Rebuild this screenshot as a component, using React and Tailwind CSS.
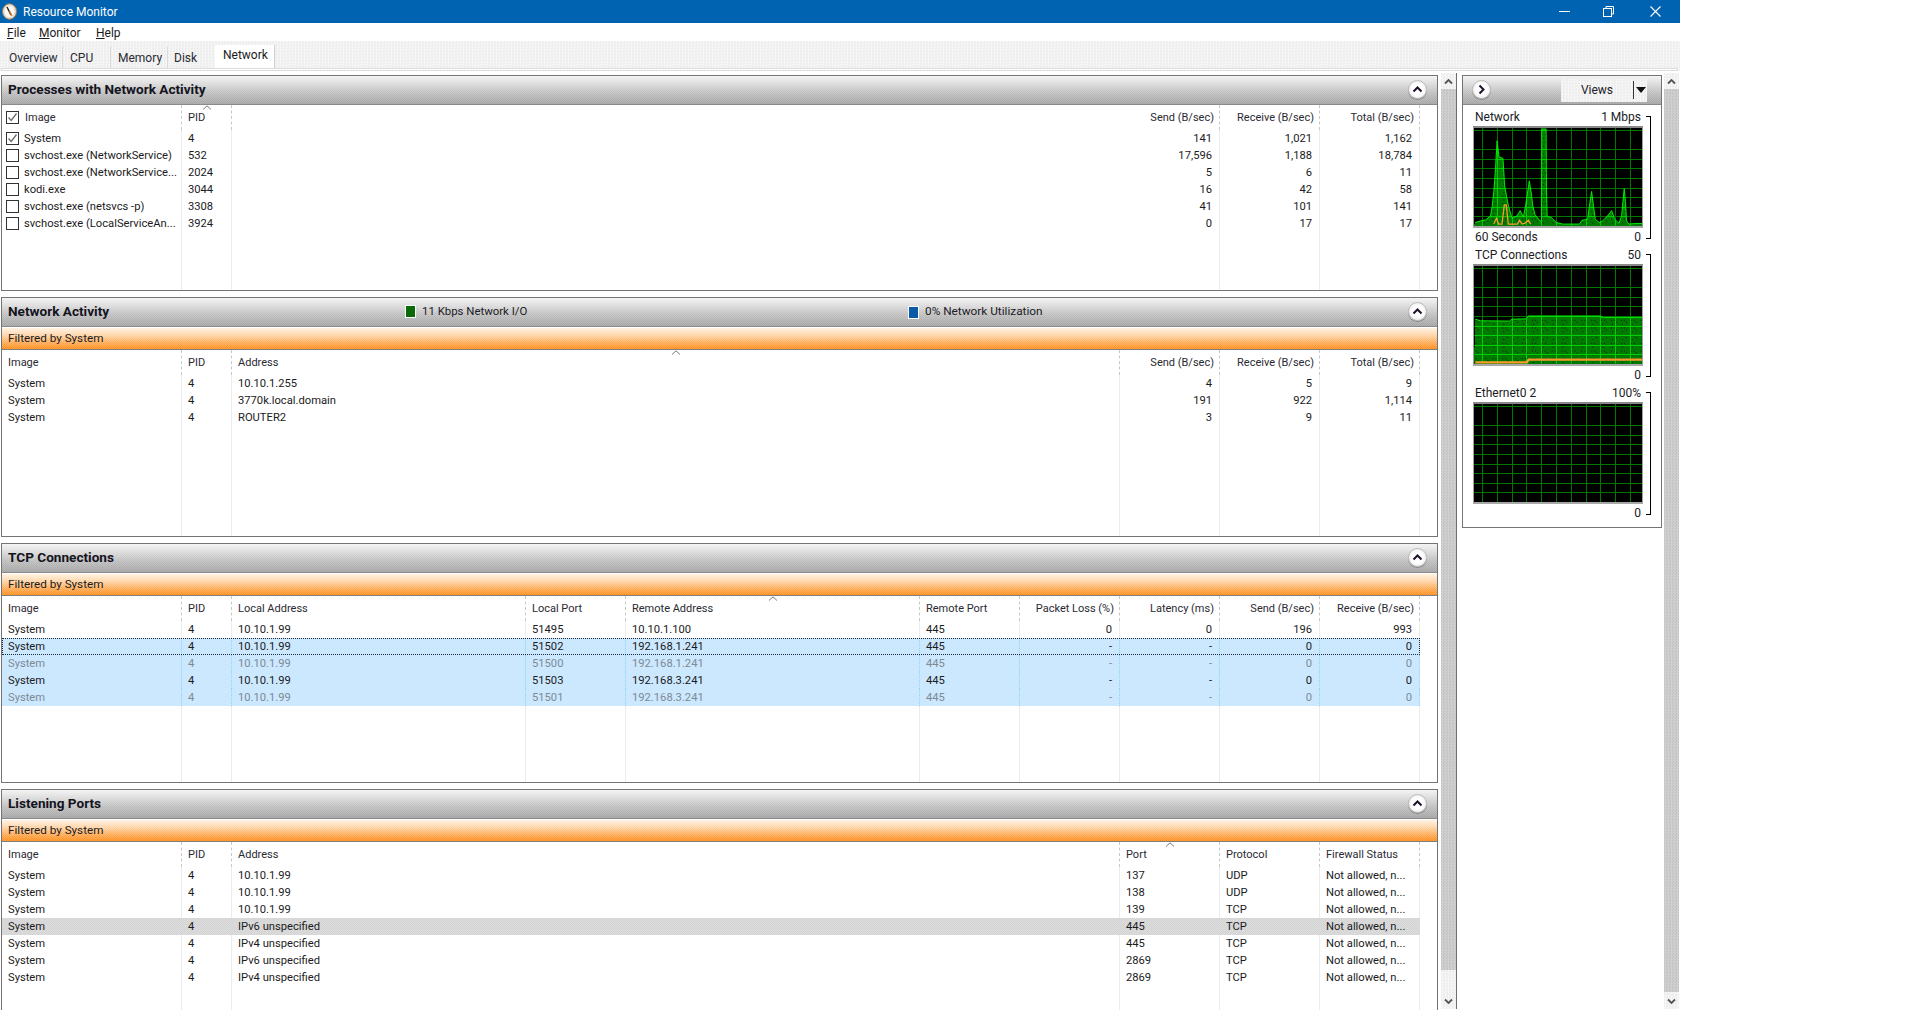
import React from 'react';

const FONT = "font-['Roboto','Liberation_Sans',sans-serif]";
const HEADER_BG = '[background:repeating-conic-gradient(#ffffff24_0_25%,#0000_0_50%)_0_0/2px_2px,linear-gradient(#f3f3f3,#e4e4e4_18%,#bdbdbd_62%,#a4a4a4)]';
const ORANGE_BG = '[background:repeating-conic-gradient(#ffffff30_0_25%,#0000_0_50%)_0_0/2px_2px,linear-gradient(#fff1e0,#ffd3a4_35%,#ffa64d_72%,#ff8a14)]';
const SCROLL_BG = '[background:repeating-conic-gradient(#ffffff33_0_25%,#0000_0_50%)_0_0/3px_3px,#c4c4c4]';
const DOTTED_BG = '[background:repeating-conic-gradient(#ffffff80_0_25%,#0000_0_50%)_0_0/3px_3px,#ececec]';
const GRAY_ROW_BG = '[background:repeating-conic-gradient(#ffffff30_0_25%,#0000_0_50%)_0_0/2px_2px,#d4d4d4]';

const PROC_GRID = 'grid-cols-[180px_50px_888px_100px_100px_100px]';
const TCP_GRID = 'grid-cols-[180px_50px_294px_100px_294px_100px_100px_100px_100px_100px]';

const processColumns = [
  { label: 'Image' },
  { label: 'PID', sorted: true },
  { label: '', noSep: true },
  { label: 'Send (B/sec)', right: true },
  { label: 'Receive (B/sec)', right: true },
  { label: 'Total (B/sec)', right: true },
];

const processRows = [
  { checked: true, cells: ['System', '4', '', '141', '1,021', '1,162'] },
  { cells: ['svchost.exe (NetworkService)', '532', '', '17,596', '1,188', '18,784'] },
  { cells: ['svchost.exe (NetworkService...', '2024', '', '5', '6', '11'] },
  { cells: ['kodi.exe', '3044', '', '16', '42', '58'] },
  { cells: ['svchost.exe (netsvcs -p)', '3308', '', '41', '101', '141'] },
  { cells: ['svchost.exe (LocalServiceAn...', '3924', '', '0', '17', '17'] },
];

const activityColumns = [
  { label: 'Image' },
  { label: 'PID' },
  { label: 'Address', sorted: true },
  { label: 'Send (B/sec)', right: true },
  { label: 'Receive (B/sec)', right: true },
  { label: 'Total (B/sec)', right: true },
];

const activityRows = [
  { cells: ['System', '4', '10.10.1.255', '4', '5', '9'] },
  { cells: ['System', '4', '3770k.local.domain', '191', '922', '1,114'] },
  { cells: ['System', '4', 'ROUTER2', '3', '9', '11'] },
];

const tcpColumns = [
  { label: 'Image' },
  { label: 'PID' },
  { label: 'Local Address' },
  { label: 'Local Port' },
  { label: 'Remote Address', sorted: true },
  { label: 'Remote Port' },
  { label: 'Packet Loss (%)', right: true },
  { label: 'Latency (ms)', right: true },
  { label: 'Send (B/sec)', right: true },
  { label: 'Receive (B/sec)', right: true },
];

const tcpRows = [
  { cells: ['System', '4', '10.10.1.99', '51495', '10.10.1.100', '445', '0', '0', '196', '993'] },
  { state: 'focus', cells: ['System', '4', '10.10.1.99', '51502', '192.168.1.241', '445', '-', '-', '0', '0'] },
  { state: 'dim', cells: ['System', '4', '10.10.1.99', '51500', '192.168.1.241', '445', '-', '-', '0', '0'] },
  { state: 'selected', cells: ['System', '4', '10.10.1.99', '51503', '192.168.3.241', '445', '-', '-', '0', '0'] },
  { state: 'dim', cells: ['System', '4', '10.10.1.99', '51501', '192.168.3.241', '445', '-', '-', '0', '0'] },
];

const portColumns = [
  { label: 'Image' },
  { label: 'PID' },
  { label: 'Address' },
  { label: 'Port', sorted: true },
  { label: 'Protocol' },
  { label: 'Firewall Status' },
];

const portRows = [
  { cells: ['System', '4', '10.10.1.99', '137', 'UDP', 'Not allowed, n...'] },
  { cells: ['System', '4', '10.10.1.99', '138', 'UDP', 'Not allowed, n...'] },
  { cells: ['System', '4', '10.10.1.99', '139', 'TCP', 'Not allowed, n...'] },
  { state: 'gray', cells: ['System', '4', 'IPv6 unspecified', '445', 'TCP', 'Not allowed, n...'] },
  { cells: ['System', '4', 'IPv4 unspecified', '445', 'TCP', 'Not allowed, n...'] },
  { cells: ['System', '4', 'IPv6 unspecified', '2869', 'TCP', 'Not allowed, n...'] },
  { cells: ['System', '4', 'IPv4 unspecified', '2869', 'TCP', 'Not allowed, n...'] },
];

const CheckBox = ({ checked }) => (
  <span className="w-[13px] h-[13px] shrink-0 border border-[#333] bg-white flex items-center justify-center">
    {checked && (
      <svg width="11" height="11" viewBox="0 0 11 11" fill="none" stroke="#6b6b6b" strokeWidth="1.3">
        <path d="M1.5 5.5 L4.2 8.5 L9.5 1.5" />
      </svg>
    )}
  </span>
);

const SortCaret = () => (
  <svg className="absolute top-[0px] left-1/2 -translate-x-1/2" width="9" height="5" viewBox="0 0 9 5" fill="none" stroke="#777" strokeWidth="1">
    <path d="M0.5 4.5 L4.5 0.8 L8.5 4.5" />
  </svg>
);

const CircleButton = ({ dir }) => (
  <span className="w-[19px] h-[19px] -mt-[2px] rounded-full border border-[#bcbcbc] bg-[radial-gradient(circle,#ffffff_45%,#dedede)] shadow-[0_1px_0_#888] flex items-center justify-center shrink-0">
    <svg width="11" height="11" viewBox="0 0 11 11" fill="none" stroke="#20122b" strokeWidth="2">
      {dir === 'up' ? <path d="M1.5 7.5 L5.5 3.5 L9.5 7.5" /> : <path d="M3.5 1.5 L7.5 5.5 L3.5 9.5" />}
    </svg>
  </span>
);

const TableRow = ({ columns, grid, row, hasChecks }) => {
  const state = row.state;
  const isBlue = state === 'focus' || state === 'dim' || state === 'selected';
  let rowClass = '';
  if (isBlue) rowClass = 'bg-[#cce8ff]';
  if (state === 'gray') rowClass = GRAY_ROW_BG;
  if (state === 'focus') rowClass += ' outline outline-1 outline-dotted outline-[#1c2a3a] -outline-offset-1';
  let sepClass = 'border-[#ececec]';
  if (isBlue) sepClass = 'border-dotted border-[#8fd3f4]';
  if (state === 'gray') sepClass = 'border-transparent';
  const textClass = state === 'dim' ? 'text-[#7d8a94]' : 'text-[#1b1b22]';

  return (
    <div className={`grid ${grid} w-[1418px] h-[17px] text-[11.2px] ${rowClass}`}>
      {row.cells.map((cell, i) => (
        <div
          key={i}
          className={`border-r ${columns[i].noSep ? 'border-transparent' : sepClass} ${textClass} leading-[17px] whitespace-nowrap overflow-hidden ${
            columns[i].right ? 'text-right pr-[7px]' : 'pl-[6px]'
          } ${i === 0 && hasChecks ? 'flex items-center gap-[5px] !pl-[4px]' : ''}`}
        >
          {i === 0 && hasChecks && <CheckBox checked={row.checked} />}
          {cell}
        </div>
      ))}
    </div>
  );
};

const Table = ({ columns, rows, grid, hasChecks }) => (
  <div className="flex-1 flex flex-col min-h-0">
    <div className={`grid ${grid} w-[1418px] h-[25px] text-[11px]`}>
      {columns.map((col, i) => (
        <div
          key={i}
          className={`relative border-r border-dashed ${col.noSep ? 'border-transparent' : 'border-[#c8c8c8]'} leading-[25px] text-[#2a2a32] whitespace-nowrap ${
            col.right ? 'text-right pr-[5px]' : 'pl-[6px]'
          } ${i === 0 && hasChecks ? 'flex items-center gap-[6px] !pl-[4px]' : ''}`}
        >
          {i === 0 && hasChecks && <CheckBox checked />}
          {col.label}
          {col.sorted && <SortCaret />}
        </div>
      ))}
    </div>
    {rows.map((row, i) => (
      <TableRow key={i} columns={columns} grid={grid} row={row} hasChecks={hasChecks} />
    ))}
    <div className={`grid ${grid} w-[1418px] flex-1`}>
      {columns.map((col, i) => (
        <div key={i} className={`border-r ${col.noSep ? 'border-transparent' : 'border-[#ececec]'}`} />
      ))}
    </div>
  </div>
);

const Panel = ({ title, filtered, className, legend, children }) => (
  <section className={`flex flex-col border border-[#747474] bg-white ${className}`}>
    <div className={`h-[29px] shrink-0 flex items-center pl-[6px] pr-[10px] border-b border-[#8a8a8a] ${HEADER_BG}`}>
      <h2 className={`text-[13.6px] font-bold text-[#14141e] whitespace-nowrap mb-[1px] ${legend ? 'w-[397px]' : ''}`}>{title}</h2>
      {legend}
      <span className="ml-auto">
        <CircleButton dir="up" />
      </span>
    </div>
    {filtered && (
      <div className={`h-[22px] shrink-0 mt-[1px] flex items-center pl-[6px] border-b border-[#808080] text-[11.7px] text-[#1b1b22] ${ORANGE_BG}`}>
        Filtered by System
      </div>
    )}
    {children}
  </section>
);

const LegendSwatch = ({ color, label, className }) => (
  <div className={`flex items-center gap-[6px] ${className}`}>
    <span className={`w-[11px] h-[13px] border border-white ${color}`} />
    <span className="text-[#1b1b26] whitespace-nowrap">{label}</span>
  </div>
);

const Scrollbar = ({ thumb }) => (
  <div className="w-[15px] h-[936px] mt-[2px] flex flex-col shrink-0">
    <div className={`h-[16px] flex items-center justify-center ${DOTTED_BG}`}>
      <svg width="9" height="7" viewBox="0 0 9 7" fill="none" stroke="#555" strokeWidth="1.8">
        <path d="M1 5.5 L4.5 2 L8 5.5" />
      </svg>
    </div>
    <div className={`${thumb} ${SCROLL_BG}`} />
    <div className={`flex-1 ${DOTTED_BG}`} />
    <div className={`h-[16px] flex items-center justify-center ${DOTTED_BG}`}>
      <svg width="9" height="7" viewBox="0 0 9 7" fill="none" stroke="#555" strokeWidth="1.8">
        <path d="M1 1.5 L4.5 5 L8 1.5" />
      </svg>
    </div>
  </div>
);

const GRID_X = [24, 69, 114, 159, 204, 249, 294, 339, 384, 429, 474];
const GRID_Y = [6, 36, 66, 96, 126, 156, 186, 216, 246, 276];

const netLine = '104,495 120,490 135,487 150,475 155,445 160,400 165,330 170,240 176,290 188,295 193,380 200,420 205,445 215,480 230,475 240,458 250,478 257,440 262,405 268,365 275,410 278,440 285,470 300,490 305,490 306,203 319,203 320,385 322,475 335,480 350,495 370,500 420,500 428,488 445,485 450,445 457,398 463,445 468,485 480,495 490,490 505,475 518,458 527,485 540,497 548,475 552,430 556,390 560,430 563,490 570,500 590,498 610,498';
const netOrange = '160,500 168,482 175,500 185,500 192,440 198,440 204,500 232,500 238,488 246,500 255,497 265,488 272,500';
const tcpLine = '104,241 120,246 208,247 215,241 258,240 265,231 485,231 492,236 610,236';
const tcpOrange = '104,376 260,376 266,367 610,367';

const Graph = ({ id, top, line, orange, baseline, orangeWidth = 4 }) => (
  <svg
    className="block w-[170px] h-[102px] border-t-2 border-x border-b-2 border-x-[#a0a0a0] border-t-[#8a8a8a] border-b-[#a8a8a8] bg-black"
    viewBox="0 0 510 306"
    preserveAspectRatio="none"
    shapeRendering="crispEdges"
  >
    <defs>
      <pattern id={`${id}-dots`} width="30" height="24" patternUnits="userSpaceOnUse">
        <rect width="30" height="24" fill="#007a00" />
        <rect x="6" y="4" width="3" height="3" fill="#021a02" />
        <rect x="15" y="4" width="3" height="3" fill="#021a02" />
        <rect x="21" y="10" width="3" height="3" fill="#021a02" />
        <rect x="9" y="16" width="3" height="3" fill="#021a02" />
      </pattern>
      {line && (
        <clipPath id={`${id}-clip`}>
          <polygon transform={`translate(-100,${-top})`} points={`100,${baseline} ${line} 610,${baseline}`} />
        </clipPath>
      )}
    </defs>
    {GRID_X.map((x) => (
      <rect key={x} x={x} y="0" width="3" height="306" fill="#007800" />
    ))}
    {GRID_Y.map((y) => (
      <rect key={y} x="0" y={y} width="510" height="3" fill="#007800" />
    ))}
    {line && (
      <>
        <polygon transform={`translate(-100,${-top})`} points={`100,${baseline} ${line} 610,${baseline}`} fill={`url(#${id}-dots)`} />
        <g clipPath={`url(#${id}-clip)`}>
          {GRID_X.map((x) => (
            <rect key={x} x={x} y="0" width="3" height="306" fill="#00d000" />
          ))}
          {GRID_Y.map((y) => (
            <rect key={y} x="0" y={y} width="510" height="3" fill="#00d000" />
          ))}
        </g>
        <polyline transform={`translate(-100,${-top})`} points={line} fill="none" stroke="#00f000" strokeWidth="3" shapeRendering="auto" />
        <polyline transform={`translate(-100,${-top})`} points={orange} fill="none" stroke="#ff9a2e" strokeWidth={orangeWidth} shapeRendering="auto" />
      </>
    )}
  </svg>
);

const GraphBlock = ({ name, max, min, children }) => (
  <div className="flex h-[138px] pl-[10px]">
    <div className="w-[170px]">
      <div className="h-[19px] flex items-center justify-between px-[2px] text-[#1b1b26]">
        <span>{name}</span>
        <span>{max}</span>
      </div>
      {children}
      <div className="h-[16px] mt-[1px] flex items-center justify-between px-[2px] text-[#1b1b26]">
        <span>{min[0]}</span>
        <span>{min[1]}</span>
      </div>
    </div>
    <div className="w-[5px] h-[123px] mt-[9px] ml-[3px] border-y border-r border-black" />
  </div>
);

const App = () => {
  return (
    <div className={`w-[1680px] h-[1010px] bg-white overflow-hidden text-[12px] flex flex-col ${FONT}`}>
      {/* title bar */}
      <div className="h-[23px] shrink-0 bg-[#0063b1] flex items-center text-white">
        <svg className="ml-[2px] mr-[6px]" width="15" height="17" viewBox="0 0 15 17">
          <ellipse cx="7.5" cy="8.5" rx="7" ry="7.8" fill="#e9dfd0" stroke="#9a7a58" strokeWidth="1" />
          <ellipse cx="7.5" cy="8.5" rx="4.8" ry="5.6" fill="#fbfaf7" />
          <path d="M5 4 L9 12" stroke="#3a2a20" strokeWidth="1.6" />
          <path d="M7.5 8 L10 13" stroke="#e8701a" strokeWidth="1.2" />
        </svg>
        <span>Resource Monitor</span>
        <div className="ml-auto flex items-center">
          <svg width="11" height="11" viewBox="0 0 11 11" stroke="#fff" strokeWidth="1">
            <path d="M0 5.5 H11" />
          </svg>
          <svg className="ml-[33px]" width="11" height="11" viewBox="0 0 11 11" fill="none" stroke="#fff" strokeWidth="1">
            <path d="M3 2.5 V0.5 H10.5 V8 H8.5" />
            <rect x="0.5" y="2.5" width="8" height="8" />
          </svg>
          <svg className="ml-[36px] mr-[19px]" width="11" height="11" viewBox="0 0 11 11" stroke="#fff" strokeWidth="1.1">
            <path d="M0.5 0.5 L10.5 10.5 M10.5 0.5 L0.5 10.5" />
          </svg>
        </div>
      </div>

      {/* menu */}
      <div className="h-[18px] shrink-0 flex items-center pl-[7px] pt-[2px] text-[#1b1b22] leading-none">
        <span className="w-[32px]"><u>F</u>ile</span>
        <span className="w-[57px]"><u>M</u>onitor</span>
        <span><u>H</u>elp</span>
      </div>

      {/* tabs */}
      <div className={`h-[30px] shrink-0 relative ${DOTTED_BG}`}>
        <div className="h-[27px] flex items-end pl-[3px]">
          <span className="w-[60px] h-[21px] pl-[6px] border-r border-[#dadada] text-[#2a2a32] leading-[22px]">Overview</span>
          <span className="w-[48px] h-[21px] pl-[7px] border-r border-[#dadada] text-[#2a2a32] leading-[22px]">CPU</span>
          <span className="w-[57px] h-[21px] pl-[7px] border-r border-[#dadada] text-[#2a2a32] leading-[22px]">Memory</span>
          <span className="w-[47px] h-[21px] pl-[6px] text-[#2a2a32] leading-[22px]">Disk</span>
          <span className="w-[60px] h-[23px] pl-[8px] bg-white border-r border-[#d0d0d0] text-[#1b1b22] leading-[21px]">Network</span>
        </div>
        <div className="h-[3px] ml-[1px] mr-[2px] bg-white border border-[#dcdcdc]" />
      </div>

      {/* body */}
      <div className="flex-1 min-h-0 flex overflow-hidden">
        <div className="w-[1438px] shrink-0 pl-[1px] pt-[4px] flex flex-col gap-[6px]">
          <Panel title="Processes with Network Activity" className="h-[216px] shrink-0">
            <Table columns={processColumns} rows={processRows} grid={PROC_GRID} hasChecks />
          </Panel>
          <Panel
            title="Network Activity"
            filtered
            className="h-[240px] shrink-0"
            legend={
              <>
                <LegendSwatch color="bg-[#0a6a0a]" label="11 Kbps Network I/O" className="w-[503px] text-[11.4px]" />
                <LegendSwatch color="bg-[#0a5aa8]" label="0% Network Utilization" className="text-[11.8px]" />
              </>
            }
          >
            <Table columns={activityColumns} rows={activityRows} grid={PROC_GRID} />
          </Panel>
          <Panel title="TCP Connections" filtered className="h-[240px] shrink-0">
            <Table columns={tcpColumns} rows={tcpRows} grid={TCP_GRID} />
          </Panel>
          <Panel title="Listening Ports" filtered className="flex-1 min-h-0 border-b-0">
            <Table columns={portColumns} rows={portRows} grid={PROC_GRID} />
          </Panel>
        </div>

        <div className="ml-[3px] flex">
          <Scrollbar thumb="h-[881px]" />
        </div>
        <div className="w-[1px] h-[936px] mt-[2px] bg-[#6e6e6e] shrink-0" />

        <aside className="ml-[5px] mt-[4px] w-[200px] h-[453px] shrink-0 border border-[#747474] flex flex-col">
          <div className={`h-[29px] shrink-0 flex items-center justify-between pl-[9px] pr-[14px] border-b border-[#8a8a8a] ${HEADER_BG}`}>
            <CircleButton dir="right" />
            <div className={`w-[86px] h-[23px] flex items-center text-[#1b1b26] ${DOTTED_BG}`}>
              <span className="w-[72px] text-center">Views</span>
              <span className="w-[1px] h-[18px] bg-[#333]" />
              <svg className="ml-[2px]" width="10" height="6" viewBox="0 0 10 6" fill="#111">
                <path d="M0 0 H10 L5 6 Z" />
              </svg>
            </div>
          </div>
          <div className="pt-[2px]">
            <GraphBlock name="Network" max="1 Mbps" min={['60 Seconds', '0']}>
              <Graph id="net" top={200} line={netLine} orange={netOrange} baseline={505} />
            </GraphBlock>
            <GraphBlock name="TCP Connections" max="50" min={['', '0']}>
              <Graph id="tcp" top={75} line={tcpLine} orange={tcpOrange} baseline={380} orangeWidth={7} />
            </GraphBlock>
            <GraphBlock name="Ethernet0 2" max="100%" min={['', '0']}>
              <Graph id="eth" top={0} />
            </GraphBlock>
          </div>
        </aside>

        <div className="ml-[2px] flex">
          <Scrollbar thumb="h-[903px]" />
        </div>
      </div>
    </div>
  );
};

export default App;
